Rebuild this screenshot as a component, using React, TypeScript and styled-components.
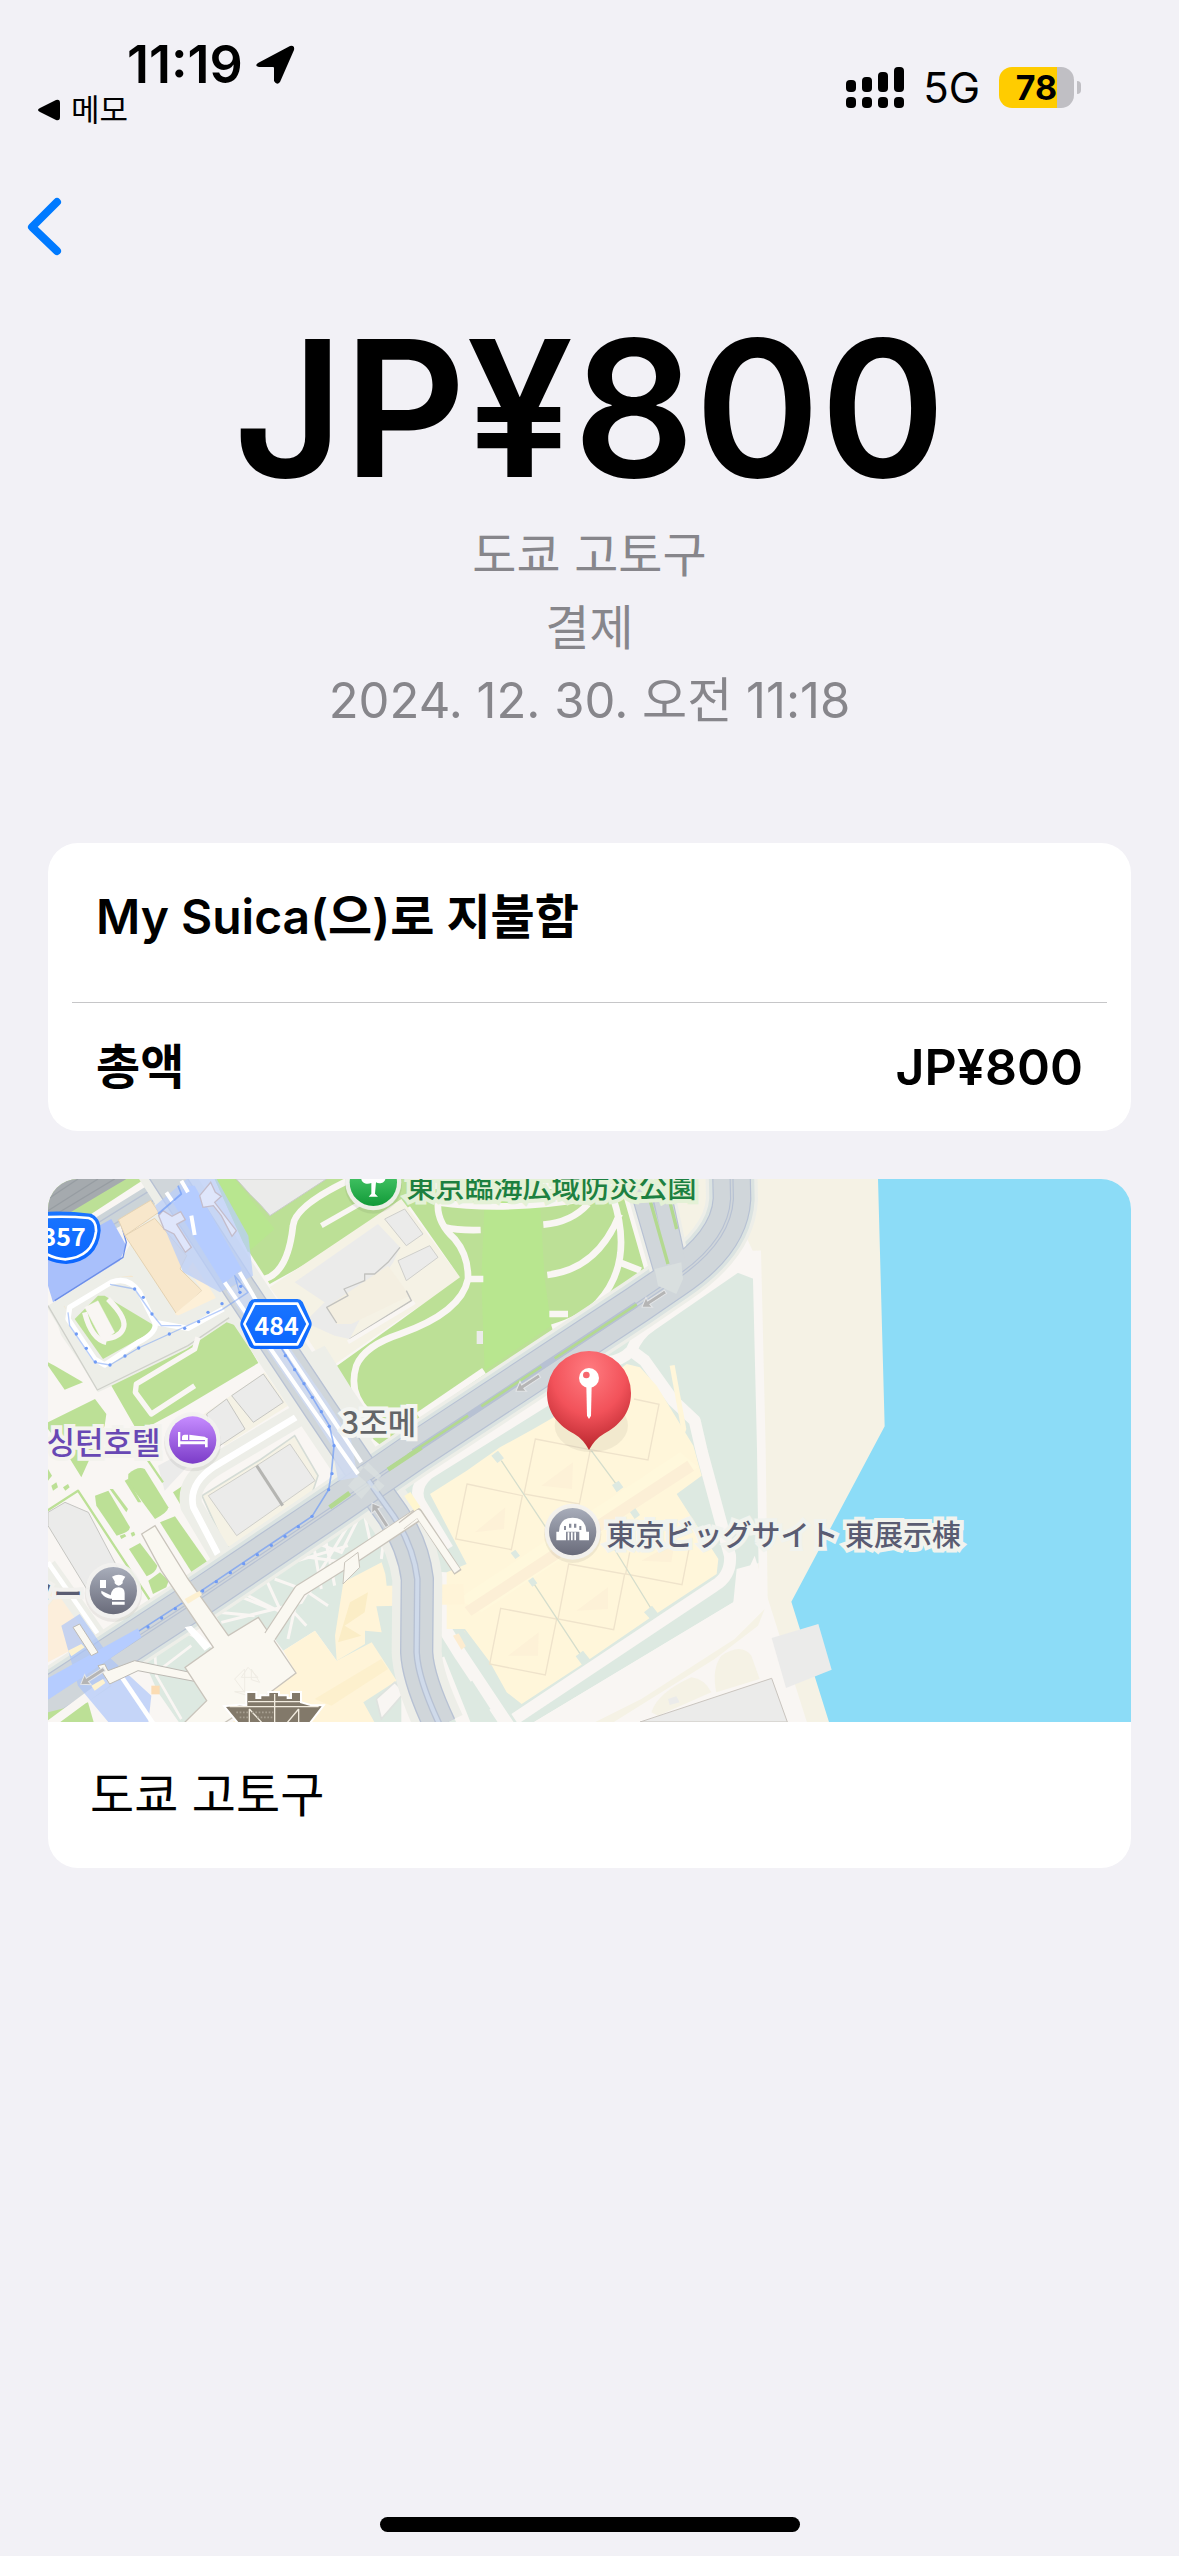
import React from "react";
import styled, { createGlobalStyle } from "styled-components";

const GlobalStyle = createGlobalStyle`
  *, *::before, *::after { box-sizing: border-box; }
  body {
    margin: 0;
    background: #f2f1f6;
    color: #000;
    font-family: Inter, "Noto Sans CJK KR", sans-serif;
  }
`;

const Page = styled.main`
  min-height: 100vh;
  display: flex;
  flex-direction: column;
`;

/* ---------- status bar ---------- */

const StatusBar = styled.header`
  display: flex;
  justify-content: space-between;
  align-items: flex-start;
  padding: 35px 98px 0 36px;
`;

const StatusLeft = styled.div`
  display: flex;
  flex-direction: column;
`;

const ClockRow = styled.div`
  display: flex;
  align-items: center;
  gap: 12px;
  padding-left: 91px;
`;

const Clock = styled.time`
  font-size: 52px;
  line-height: 60px;
  font-weight: 600;
`;

const ReturnLink = styled.a`
  display: flex;
  align-items: center;
  gap: 10px;
  font-size: 31px;
  line-height: 30px;
  font-weight: 400;
  color: #000;
  text-decoration: none;
`;

const StatusRight = styled.div`
  display: flex;
  align-items: center;
  gap: 19px;
  height: 41px;
  margin-top: 32px;
`;

const Network = styled.span`
  font-size: 42px;
  line-height: 41px;
  font-weight: 400;
`;

const Battery = styled.div`
  display: flex;
  align-items: center;
  gap: 3px;
`;

const BatteryBody = styled.div`
  width: 75px;
  height: 41px;
  border-radius: 13px;
  display: flex;
  align-items: center;
  justify-content: center;
  background: linear-gradient(to right, #ffcc00 78%, #c0bfc4 78%);
  font-size: 34px;
  line-height: 41px;
  font-weight: 700;
`;

const BatteryTip = styled.div`
  width: 4px;
  height: 13px;
  border-radius: 0 4px 4px 0;
  background: #c0bfc4;
`;

/* ---------- navigation and summary ---------- */

const NavBar = styled.nav`
  display: flex;
  padding: 68px 24px 0;
`;

const BackButton = styled.button`
  display: flex;
  padding: 0;
  border: 0;
  background: none;
  color: #007aff;
`;

const Summary = styled.section`
  display: flex;
  flex-direction: column;
  align-items: center;
  padding: 49px 24px 0;
`;

const Amount = styled.h1`
  margin: 0 0 10px;
  font-size: 190px;
  line-height: 200px;
  font-weight: 600;
`;

const SummaryLine = styled.p<{ $mixed?: boolean }>`
  margin: 0;
  font-size: ${(p) => (p.$mixed ? 49 : 48)}px;
  line-height: 73px;
  color: #87868b;
`;

/* ---------- cards ---------- */

const Cards = styled.div`
  display: flex;
  flex-direction: column;
  gap: 48px;
  padding: 106px 48px 48px;
`;

const Card = styled.section`
  border-radius: 30px;
  overflow: hidden;
  background: #fff;
`;

const CardRow = styled.div<{ $tall?: boolean }>`
  display: flex;
  justify-content: space-between;
  align-items: center;
  margin: 0 24px;
  padding: ${(p) => (p.$tall ? "44px 24px 55px" : "34px 24px 34px")};
  font-size: 48px;
  line-height: 60px;
  font-weight: 600;
  & + & {
    border-top: 1px solid #c6c6c8;
  }
`;

const Total = styled.span`
  font-size: 50px;
`;

const Caption = styled.p`
  margin: 0;
  padding: 43px 42px;
  font-size: 48px;
  line-height: 60px;
`;

const HomeIndicator = styled.div`
  width: 420px;
  max-width: 40%;
  height: 15px;
  margin: auto auto 24px;
  border-radius: 8px;
  background: #000;
`;

/* ---------- map ---------- */

const MapFrame = styled.div`
  position: relative;
  height: 543px;
  overflow: hidden;
`;

const MapDrawing = styled.svg`
  display: block;
  width: 100%;
  height: 100%;
`;

/* Labels are anchored to the centre of the map, like the drawing itself. */
const MapLabel = styled.span<{ $x: number; $y: number; $color: string; $halo: string }>`
  position: absolute;
  left: calc(50% + ${(p) => p.$x}px);
  top: ${(p) => p.$y}px;
  transform: translateY(-50%);
  white-space: nowrap;
  font-family: "Noto Sans CJK KR", sans-serif;
  font-size: 31px;
  line-height: 36px;
  font-weight: 500;
  color: ${(p) => p.$color};
  -webkit-text-stroke: 8px ${(p) => p.$halo};
  paint-order: stroke fill;
`;

const JapaneseLabel = styled(MapLabel)`
  font-family: "Noto Sans CJK JP", sans-serif;
  font-size: 29px;
`;

const RouteNumber = styled(MapLabel)`
  font-size: 25px;
  font-weight: 700;
  -webkit-text-stroke: 0;
`;

const C = {
  land: "#f9f6f3",
  cream: "#f5f2e5",
  green: "#bce096",
  bright: "#b8e68f",
  teal: "#dde9e1",
  road: "#d0d6da",
  edge: "#b7c1d3",
  curb: "#edeee8",
  grey: "#ebebea",
  hall: "#fff6da",
  plaza: "#faf8f1",
  blue: "#b5ccff",
  route: "#6f9bf5",
};

const Poly = ({ p, f, s, w = 3, o }: { p: string; f: string; s?: string; w?: number; o?: number }) => (
  <polygon points={p} fill={f} stroke={s} strokeWidth={s ? w : undefined} opacity={o} />
);

const Line = ({ d, s, w, o }: { d: string; s: string; w: number; o?: number }) => (
  <path d={d} fill="none" stroke={s} strokeWidth={w} opacity={o} strokeLinejoin="round" />
);

const MAIN = "M-60 1592L456 1255L846 992L1096 820L1766 378L1880 300Q2045 190 2052 60L2050 -30";
const AVENUE = "M330 -50L576 330L816 690L961 905L1036 1010Q1096 1100 1108 1200L1106 1420Q1110 1500 1176 1640";
const SOUTH = "M961 905L1036 1010Q1096 1100 1108 1200L1106 1420Q1110 1500 1176 1640";
const LOOP =
  "M2100 240L1810 440Q1770 465 1750 515Q1720 545 1680 548L1140 885Q1095 925 1116 970L1200 1110";
const HALL =
  "1356,805 1456,750 1560,690 1736,555 1776,565 1826,620 1936,800 1961,890 1886,945 2011,1140 2006,1185 1801,1320 1596,1460 1421,1575 1376,1540 1326,1450 1251,1350 1196,1350 1196,1180 1256,1155 1146,945 1256,875";

const routeDots = [
  [712, 530], [740, 572], [768, 614], [793, 655], [820, 698], [844, 742], [858, 800], [852, 884], [842, 932],
  [792, 1012], [751, 1043], [711, 1072], [670, 1099], [628, 1127], [587, 1154], [547, 1181], [505, 1208],
  [464, 1236], [382, 1289], [341, 1317], [300, 1344],
  [85, 465], [115, 508], [142, 549], [186, 558], [231, 531], [272, 507], [364, 465], [410, 448], [452, 428],
  [480, 400], [522, 374], [576, 340], [578, 322], [260, 330], [286, 355], [312, 405],
];

const Arrow = ({ x, y, a }: { x: number; y: number; a: number }) => (
  <path
    transform={`translate(${x} ${y}) rotate(${a})`}
    d="M0 0L26 -18L24 -6L84 -6L84 6L24 6L26 18Z"
    fill="#b5b5b5"
    stroke="#e4e6e8"
    strokeWidth={3}
  />
);

const Badge = ({ x, y, fill, children }: { x: number; y: number; fill: string; children: React.ReactNode }) => (
  <g transform={`translate(${x} ${y})`}>
    <circle r={86} cy={8} fill="#000" opacity={0.06} />
    <circle r={84} fill="#f3f2ef" opacity={0.9} />
    <circle r={71} fill={fill} />
    {children}
  </g>
);

/* Footpaths inside the turning circle. */
const CirclePaths = () => (
  <g fill="none" stroke={C.land}>
    <path d="M110 400Q130 480 175 490M180 360Q240 420 225 450Q215 475 170 480" strokeWidth={16} />
    <path d="M110 385L150 365L200 460L165 490Z" fill={C.land} />
  </g>
);

const CityMap = () => (
  <MapDrawing viewBox="0 0 3249 1629" preserveAspectRatio="xMidYMid slice" aria-hidden="true">
    <defs>
      <linearGradient id="gGreen" x1="0" y1="0" x2="0" y2="1">
        <stop offset="0" stopColor="#5fd97c" />
        <stop offset="1" stopColor="#119a38" />
      </linearGradient>
      <linearGradient id="gPurple" x1="0" y1="0" x2="0" y2="1">
        <stop offset="0" stopColor="#c68cff" />
        <stop offset="1" stopColor="#7b3cc8" />
      </linearGradient>
      <linearGradient id="gSlate" x1="0" y1="0" x2="0" y2="1">
        <stop offset="0" stopColor="#a8adba" />
        <stop offset="1" stopColor="#696b7a" />
      </linearGradient>
      <radialGradient id="gPin" cx="0.5" cy="0.2" r="0.8">
        <stop offset="0" stopColor="#ff7b80" />
        <stop offset="0.55" stopColor="#f2525a" />
        <stop offset="1" stopColor="#b8262d" />
      </radialGradient>
      <linearGradient id="gSign" x1="0" y1="0" x2="0" y2="1">
        <stop offset="0" stopColor="#1a75ff" />
        <stop offset="1" stopColor="#0b66ff" />
      </linearGradient>
    </defs>

    <rect width={3249} height={1629} fill={C.land} />
    <Poly p="2010,-10 2520,-10 2520,1640 2130,1640 2130,250" f={C.cream} />
    <Poly p="1800,-10 2020,-10 2010,120 1900,220 1860,130" f={C.cream} />

    {/* bay */}
    <Poly p="2490,0 2510,742 2230,1268 2343,1629 3249,1629 3249,0" f="#8cdcf7" />

    {/* rail yard and upper-left roads */}
    <Poly p="0,0 290,0 0,190" f={C.green} />
    <Poly p="0,0 235,0 150,50 0,140" f="#a5aaae" />
    <Line d="M0 60L90 0M0 95L150 0M0 120L200 0" s="#979da2" w={4} />
    <Poly p="0,205 330,0 420,0 420,40 200,150 0,280" f="#ccd4d8" />
    <Line d="M0 225L345 10M0 255L390 20" s={C.edge} w={4} />
    <Poly p="300,0 360,0 350,34 320,34" f="#bfcbd2" />

    {/* blocks on the left */}
    <Poly p="0,380 220,240 330,60 530,330 610,430 150,640 0,390" f={C.curb} />
    <Poly p="0,225 190,120 235,200 215,245 15,370 0,320" f="#a9c0fb" />
    <Line d="M215 120L235 190L225 235L20 365" s="#6c8ee8" w={4} />
    <Poly p="211,122 308,64 332,100 231,170" f="#f8e7cb" s="#e4d2b2" />
    <Poly p="231,170 320,118 416,230 396,270 462,335 386,405" f="#f8e7cb" s="#e4d2b2" />
    <Poly p="440,240 500,330 505,370 400,415 380,405 462,335 420,270" f="#fdf0d8" />
    <Line d="M50 385L175 300L250 295L330 400L345 440" s="#f5e6cc" w={10} />

    {/* parks */}
    <Poly p="500,0 1116,0 1116,65 665,315 585,190" f={C.green} />
    <Poly p="500,0 560,0 640,100 680,150 600,220" f={C.bright} />
    <Poly p="565,0 835,0 666,110 640,80 606,46" f={C.grey} s="#c9cbc8" />
    <Poly p="665,325 1060,60 1240,300 1056,420 840,570 780,480" f={C.cream} />
    <Poly p="740,310 990,135 1056,205 1036,250 1000,300 905,480 860,470 770,430 830,370" f={C.grey} />
    <Poly p="835,385 930,320 1020,260 1085,350 910,435 866,435" f="#f4efe1" />
    <Line d="M905 480L1090 365L1075 335M866 432L836 385L900 350L888 330L950 305L950 285L980 285L1020 250L1056 205" s="#c2c2bf" w={4} />
    <Poly p="1010,120 1070,90 1125,165 1075,200" f={C.grey} s="#cfcfcb" />
    <Poly p="1050,245 1145,200 1170,235 1075,305" f={C.grey} s="#cfcfcb" />
    <Poly p="840,580 1056,425 1236,295 1085,80 1120,30 1720,30 1790,275 1110,720 1000,800 950,760" f={C.green} />
    <Poly p="1310,60 1475,60 1490,300 1510,440 1310,575 1300,300" f={C.bright} />

    {/* park paths */}
    <g fill="none" stroke={C.land} strokeWidth={20}>
      <path d="M910 0Q740 80 735 140Q720 280 650 300" />
      <path d="M960 60L820 140" strokeWidth={16} />
      <path d="M1170 70Q1165 130 1220 180Q1262 230 1260 300Q1240 400 1056 465Q950 500 925 560Q900 640 960 700" />
      <path d="M1190 145Q1230 155 1298 153M1258 300L1306 300M1170 70Q1380 100 1640 55" />
      <path d="M1620 75Q1570 130 1486 137M1715 105Q1650 270 1498 288M1695 55Q1760 250 1650 370Q1600 420 1512 446M1504 405L1560 405M1715 250L1778 275" />
      <path d="M1308 575L1110 710" />
      <path d="M1100 370L900 490" strokeWidth={12} />
    </g>
    <Poly p="1286,456 1305,456 1305,495 1286,495" f={C.grey} />
    <Poly p="905,620 1000,760 960,790 790,520 830,500" f={C.curb} />

    {/* loop street */}
    <Line d="M60 400L190 325L260 330L330 430L400 450L560 380" s={C.curb} w={70} />
    <Line d="M60 400L75 450L160 570L330 480L420 440L570 370" s={C.curb} w={80} />
    <Poly p="150,350 170,350 320,440 310,460 165,540 80,420" f={C.green} />
    <CirclePaths />
    <Line d="M65 385L190 310Q240 290 275 340L320 430Q330 460 270 490L170 558L140 540L60 420Z" s="#fff" w={16} />
    <Line d="M320 430L420 448L580 360" s="#fff" w={16} />
    <Line d="M0 380L148 633L420 500L545 415L620 440" s="#cfd0ca" w={4} />

    {/* lower-left parks and blocks */}
    <Poly p="0,550 20,560 105,610 50,632 0,560" f={C.green} />
    <Poly p="190,620 416,510 536,430 566,440 631,552 400,690 270,760" f={C.green} />
    <Line d="M450 475L440 510L265 615L262 640L310 705L440 620M640 560L420 700" s={C.land} w={16} />
    <Poly p="0,730 141,660 175,705 170,740 100,895 60,830 0,750" f={C.green} />
    <Poly p="460,710 650,580 720,680 530,800" f={C.cream} />
    <Poly p="551,650 646,585 706,670 616,730" f={C.grey} s="#c6c6c2" />
    <Poly p="476,705 536,660 591,750 500,810" f={C.grey} s="#c6c6c2" />
    <Poly p="330,860 480,780 420,860 350,935" f={C.grey} />
    <Poly p="0,1000 51,970 121,1000 216,1180 116,1230 0,1040" f={C.grey} s="#c6c6c2" />
    <Poly p="0,1200 70,1240 170,1360 0,1450" f="#fceedb" />
    <Line d="M-10 1000L90 935L310 1270" s={C.green} w={7} />
    <Line d="M270 800L345 910" s={C.green} w={7} />
    <g fill={C.green}>
      <polygon points="0,870 12,890 0,905" />
      <polygon points="10,920 25,910 30,925 15,935" />
      <polygon points="45,925 60,915 65,925 52,935" />
      <path d="M141 950L181 935L246 1045Q245 1060 206 1070L145 980Z" />
      <path d="M241 885Q270 860 290 870L361 985Q360 1000 321 1020L240 910Z" />
      <path d="M336 1030L381 1012L478 1150L431 1180Z" />
      <path d="M243 1110L276 1092L328 1160Q325 1180 296 1192Z" />
      <path d="M301 1205L336 1180L362 1205L355 1225L315 1245Z" />
      <polygon points="185,930 195,930 240,990 235,1000" />
      <polygon points="230,905 240,900 280,970 270,970" />
      <polygon points="215,1070 230,1065 235,1072 220,1080" />
      <polygon points="248,1062 258,1058 262,1068 252,1073" />
      <polygon points="375,940 420,910 405,990" />
    </g>

    {/* side street */}
    <Poly p="462,950 640,840 740,770 810,890 790,950 560,1110 530,1100" f={C.cream} s="#d5dcd6" w={5} />
    <Poly p="481,950 626,860 726,795 801,905 566,1070" f={C.grey} s="#cfcfca" />
    <Line d="M626 860L704 980" s="#b5b5b2" w={9} />
    <Line d="M800 680L500 858Q415 910 430 980L540 1165" s={C.curb} w={66} />
    <Line d="M785 690L500 862Q420 915 436 985L530 1165" s="#fff" w={20} />
    <Line d="M0 1160L170 1400" s={C.curb} w={50} />
    <Line d="M0 1150L160 1380" s="#fff" w={14} />

    {/* ground around the exhibition halls */}
    <Poly p="2040,270 2118,300 2141,1150 2066,1170 2056,1270 1440,1640 1120,1640 1150,1100 1040,930 1200,850" f={C.teal} />
    <Poly p="490,1290 930,990 1010,1060 1060,1200 1060,1640 850,1640 866,1445 801,1355 706,1415 631,1315 541,1370" f={C.teal} />
    <Poly p="276,1420 400,1355 496,1410 411,1465 476,1565 400,1640 330,1540" f={C.teal} />
    <g fill="none" stroke={C.land} strokeWidth={9}>
      <path d="M940 1000L880 1120L800 1090M500 1310L700 1160L900 1100M520 1330L760 1270L900 1040M580 1240L700 1300L640 1170M680 1200L790 1240M795 1090L820 1230M830 1070L860 1220M750 1130L890 1150M740 1290L720 1380M710 1270L775 1340M780 1240L840 1280M950 1010L965 1080M510 1300L620 1310M570 1250L670 1290M1010 1060L1000 1140" />
      <path d="M320 1410L325 1490L400 1620M325 1480L430 1400" strokeWidth={8} />
    </g>

    {/* quay streets */}
    <Poly p="1440,1640 2056,1270 2120,1130 2160,1260 2280,1640" f={C.land} />
    <Poly p="1620,1640 1780,1560 2060,1380 2150,1290 2130,1340 2000,1440 1680,1640" f={C.cream} />
    <path d="M1810 1600Q1830 1540 1930 1495Q1970 1500 1990 1540L1830 1610Z" fill={C.cream} />
    <path d="M2005 1540Q1990 1470 2020 1430Q2080 1390 2110 1430L2135 1500Z" fill={C.cream} />
    <Poly p="1776,1629 2171,1498 2218,1629" f={C.grey} s="#c9c4be" />
    <Poly p="2171,1377 2311,1335 2351,1472 2214,1527" f={C.grey} />
    <Poly p="1860,1560 1885,1552 1895,1570 1865,1578" f={C.grey} />
    <Line d="M2126 215L2140 810L2146 1260" s={C.land} w={26} />
    <Line d={LOOP} s={C.land} w={34} />
    <Line d="M1750 515L1790 545L1876 665L1940 725L1962 820L2046 1130Q2050 1190 2000 1220L1400 1620" s={C.land} w={36} />
    <Line d="M1200 1180L1190 1350L1240 1430L1380 1640M1170 1440L1250 1640" s={C.land} w={40} />
    <Line d="M1265 1510L1320 1595" s={C.teal} w={18} />

    {/* east hall */}
    <Poly p={HALL} f={C.hall} />
    <Poly p="1865,560 1880,558 1915,750 1905,780" f={C.hall} />
    <Poly p="1896,820 1950,865 1300,1300 1230,1260" f="#fff8dc" />
    <Poly p="1918,845 1938,875 1270,1310 1250,1285" f="#fcefd6" />
    <Poly p="1215,1370 1250,1355 1262,1395 1240,1412" f="#fdecd0" />
    <g fill="none" stroke="#efe3cb" strokeWidth={4}>
      <path d="M1462 780L1627 812L1594 975L1428 945ZM1758 660L1833 676L1800 843L1627 812M1257 915L1423 950L1390 1112L1223 1080Z" />
      <path d="M1562 1155L1730 1185L1697 1352L1530 1320ZM1745 1120L1733 1185L1902 1217L1925 1100M1358 1288L1526 1320L1492 1488L1325 1455Z" />
    </g>
    <g fill="none" stroke="#d5ddcc" strokeWidth={4}>
      <path d="M1360 845L1500 1055M1630 815L1708 920M1690 1095L1810 1290M1455 1210L1600 1430" />
    </g>
    <g fill={C.teal}>
      <path d="M1330 830L1350 815L1368 838L1348 852ZM1692 918L1712 905L1726 925L1706 940ZM1388 1122L1402 1112L1416 1130L1402 1140ZM1440 1205L1455 1195L1468 1213L1453 1223ZM1788 1300L1812 1280L1832 1306L1810 1324ZM1583 1432L1605 1415L1628 1444L1604 1460ZM1746 1000L1762 988L1776 1008L1760 1020ZM1230 1360L1245 1350L1272 1395L1258 1410Z" />
    </g>
    <g fill="#fdf1d7">
      <path d="M1480 920L1575 850L1572 930ZM1280 1060L1372 985L1368 1050ZM1585 1295L1680 1225L1680 1290ZM1380 1430L1472 1360L1470 1430ZM1780 1145L1880 1090L1870 1150Z" />
    </g>

    {/* west hall */}
    <Poly p="706,1415 801,1355 866,1445 971,1390 1046,1505 946,1570 985,1640 540,1640 640,1560 744,1482" f="#fff4d8" />
    <Poly p="886,1210 1001,1150 1012,1185 1016,1220 1246,1215 1250,1276 985,1282 1001,1360 951,1355 951,1395 866,1445 861,1370" f="#fff4d8" />
    <Poly p="800,1560 1000,1440 1020,1470 850,1580" f="#fdf0cd" />
    <Poly p="906,1270 960,1240 950,1300 890,1340 940,1370 870,1390" f="#fbedc6" />
    <path d="M985 1560L1040 1510L1070 1540L1000 1620Z" fill={C.land} stroke="#dfe3df" strokeWidth={5} />

    {/* roads */}
    <Line d={AVENUE} s={C.curb} w={150} />
    <Line d={MAIN} s={C.curb} w={156} />
    <Line d={MAIN} s="#dbe3e1" w={136} />
    <Line d="M1770 20L1845 280M1838 20L1888 260" s={C.curb} w={76} />
    <Line d={AVENUE} s={C.edge} w={100} />
    <Line d={AVENUE} s={C.road} w={92} />
    <Line d={MAIN} s={C.edge} w={116} />
    <Line d="M1772 20L1850 290M1836 20L1890 270" s={C.edge} w={60} />
    <Line d={MAIN} s={C.road} w={109} />
    <Line d="M1772 20L1850 290M1836 20L1890 270" s={C.road} w={53} />
    <Line d={MAIN} s={C.edge} w={12} />
    <Line d={MAIN} s={C.road} w={5} />
    <Line d="M1096 818L1766 376" s={C.edge} w={18} />
    <Line d="M1080 828L1260 710M1300 682L1480 563M1520 538L1766 376" s="#b3d990" w={8} />
    <Line d="M1020 872L1120 806M845 985L905 942" s="#b3d990" w={14} />
    <Line d="M1805 60L1860 255M1866 70L1886 150" s="#b3d990" w={10} />
    <Line d={SOUTH} s={C.edge} w={20} />
    <Line d={SOUTH} s="#cfdaea" w={12} />
    <path d="M960 850l40 40l-60 70l-40 -40zM920 880l70 60l20 -20l-70 -60z" fill="#d9e0e0" opacity={0.8} />
    <Poly p="1820,270 1900,250 1905,300 1885,345 1830,320" f="#d9dfdf" />

    {/* transit avenue */}
    <Line d="M560 320L816 690L880 790L900 900" s="#cfdaf0" w={60} o={0.9} />
    <Poly p="321,80 416,0 506,0 601,170 615,290 516,340 406,280" f="#b9cdf8" o={0.75} />
    <Poly p="371,65 416,20 440,20 581,270 526,315" f={C.blue} />
    <g fill="#dfe6fb" stroke="#c4bdcb" strokeWidth={4}>
      <path d="M332 110L345 95L372 112L398 98L412 122L386 136L430 205L412 220L378 165L348 150Z" />
      <path d="M455 50L488 10L502 40L520 52L500 70L565 155L552 172L520 110L496 80L465 85Z" />
    </g>
    <Line d="M355 40L375 70M400 5L420 40M430 110L440 168M530 310L800 700L930 885M575 280L680 460L940 850" s="#fff" w={12} />
    <Line d="M330 105L400 45L390 20M676 470L790 650L844 740L858 800L850 884L842 932L792 1012L456 1238L270 1358" s={C.route} w={5} o={0.7} />
    <Line d="M60 400L65 440L140 550L186 558L272 507L364 465L522 392L600 340L560 290L576 345M186 316L260 330L312 405L340 440L400 440" s={C.route} w={4} o={0.5} />
    {routeDots.map(([x, y]) => (
      <circle key={`${x}-${y}`} cx={x} cy={y} r={5} fill={C.route} />
    ))}

    {/* lower-left station */}
    <Poly p="0,1600 120,1570 140,1640 0,1640" f={C.green} />
    <Line d="M0 1640L190 1500L240 1560" s={C.land} w={26} />
    <Poly p="40,1340 95,1305 190,1440 310,1550 300,1640 190,1640 90,1520" f="#a9c3fb" o={0.65} />
    <Line d="M215 1485L320 1640" s="#fff" w={14} />
    <Poly p="0,1497 270,1348 280,1375 110,1490 0,1562" f={C.blue} />
    <Poly p="60,1415 100,1395 110,1405 70,1432" f="#fdf2d0" />
    <Poly p="130,1520 165,1500 172,1512 140,1535" f="#fdf2d0" />
    <Poly p="310,1520 335,1520 335,1546 310,1546" f="#fbdcb4" />
    <Poly p="75,1345 95,1335 150,1420 130,1430" f={C.plaza} s="#bdbab4" />
    <Poly p="150,1460 170,1455 180,1475 260,1445 450,1485 455,1510 270,1475 185,1515" f={C.plaza} s="#bdbab4" />

    {/* plaza and pedestrian decks */}
    <Poly p="281,1065 321,1040 420,1200 541,1370 631,1315 744,1482 640,1560 516,1640 400,1640 476,1565 411,1465 496,1405 340,1175" f={C.plaza} s="#c9c4bb" w={4} />
    <Poly p="410,1260 455,1235 462,1248 420,1274" f="#fdf0d0" />
    <Poly p="410,1345 430,1340 490,1400 470,1415" f="#fff" />
    <Line d="M666 1372L756 1235L900 1145L1116 1003" s="#c9c4bb" w={40} />
    <Line d="M662 1378L756 1235L900 1145L1126 995" s={C.plaza} w={33} />
    <Poly p="890,1150 930,1120 935,1165 885,1215" f={C.plaza} s="#c9c4bb" />
    <Line d="M1060 1040L1110 1000L1230 1180" s="#c9c4bb" w={26} />
    <Line d="M1056 1044L1110 1003L1228 1176" s={C.plaza} w={20} />
    <Line d="M1078 945L1108 990" s="#fff6cf" w={22} />
    <path d="M560 1500l30 -30v70zM600 1465l30 30h-50zM600 1550l-40 -12h40zM610 1470l25 40l-25 -8z" fill="none" stroke="#efece4" strokeWidth={3} />

    <Arrow x={1782} y={384} a={-33} />
    <Arrow x={1404} y={636} a={-33} />
    <Arrow x={972} y={972} a={57} />
    <Arrow x={98} y={1516} a={-33} />

    {/* observation tower */}
    <path
      d="M534 1584L575 1580L598 1582V1542H622V1560H640V1552H664V1542H690V1552H716V1560H732V1542H756V1572L790 1582H821L776 1640H580Z"
      fill="#82796a"
      stroke="#fff"
      strokeWidth={12}
      paintOrder="stroke"
    />
    <path d="M545 1583H812M680 1545V1629M604 1590L650 1640M604 1590V1640M752 1590L710 1640M752 1590V1640M600 1568H756" stroke="#f2ecdf" strokeWidth={4} fill="none" />
    <path d="M565 1600H600M575 1615H602M612 1600H676M628 1615H676" stroke="#a69e90" strokeWidth={5} strokeDasharray="5 5" />

    {/* route signs */}
    <g transform="translate(684 435)">
      <path
        d="M-64 -75H64Q74 -75 80 -66L104 -12Q110 0 104 12L80 66Q74 75 64 75H-64Q-74 75 -80 66L-104 12Q-110 0 -104 -12L-80 -66Q-74 -75 -64 -75Z"
        fill="url(#gSign)"
      />
      <path d="M-64 -61H64L95 0L64 61H-64L-95 0Z" fill="none" stroke="#fff" strokeWidth={8} strokeLinejoin="round" />
    </g>
    <path d="M-40 100Q50 94 130 104Q158 116 158 155Q150 245 55 255Q-20 250 -50 200Z" fill="url(#gSign)" />
    <path d="M-40 116Q50 110 122 117Q146 124 144 158Q134 234 52 241Q-10 236 -44 190Z" fill="none" stroke="#fff" strokeWidth={8} />

    {/* points of interest */}
    <Badge x={976} y={10} fill="url(#gGreen)">
      <path d="M-36 -14C-40 -40 -12 -44 0 -34C14 -46 42 -38 36 -14C38 2 18 6 8 0L5 34L14 43H-14L-6 34V2C-20 8 -38 2 -36 -14Z" fill="#fff" />
    </Badge>
    <Badge x={434} y={783} fill="url(#gPurple)">
      <path d="M-44 -24H-37V4H37V-6H45V22H37V13H-37V20H-44ZM-32 -8Q-32 -16 -24 -16H-14V0H-32ZM-10 -16L36 -10Q44 -8 44 0H-10Z" fill="#fff" />
    </Badge>
    <Badge x={1574} y={1058} fill="url(#gSlate)">
      <path d="M-49 0H-41Q-40 -42 0 -42Q40 -42 41 0H49V26H20V0H-20V26H-49ZM-15 2H-10V26H-15ZM-5 2H0V26H-5ZM5 2H10V26H5Z" fill="#fff" />
      <path d="M-26 -17h6v12h-6zM-11 -24h7v12h-7zM4 -24h7v12h-7zM20 -17h6v12h-6z" fill="#878b99" />
    </Badge>
    <Badge x={196} y={1235} fill="url(#gSlate)">
      <path d="M-4 -42Q16 -54 36 -42L28 -28V-22Q16 -8 4 -22V-28ZM-40 -32H-22V-8H-40ZM-36 0L-8 14Q-4 -10 16 -10Q34 -10 34 8V28H-4V24Q-22 26 -36 8ZM-4 33H34V42H-4Z" fill="#fff" />
    </Badge>

    {/* transaction pin */}
    <ellipse cx={1630} cy={740} rx={110} ry={80} fill="#000" opacity={0.05} />
    <path
      d="M1623 516A126 126 0 0 1 1749 642C1749 705 1710 742 1668 764Q1640 780 1623 813Q1606 780 1578 764C1536 742 1497 705 1497 642A126 126 0 0 1 1623 516Z"
      fill="url(#gPin)"
    />
    <path d="M1615 620H1631L1629 710L1623 720L1617 710Z" fill="#fff" />
    <circle cx={1623} cy={597} r={30} fill="#fff" />
    <circle cx={1615} cy={588} r={10} fill="#f7666d" />
  </MapDrawing>
);

const signalBars = [12, 15, 20, 25];

export default function App() {
  return (
    <>
      <GlobalStyle />
      <Page>
        <StatusBar>
          <StatusLeft>
            <ClockRow>
              <Clock>11:19</Clock>
              <svg width="40" height="40" viewBox="0 0 40 40" aria-hidden="true">
                <path d="M3 18L35 1Q40 0 39 5L25 37Q22 41 19 36V23Q19 22 18 22H4Q-1 21 3 18Z" />
              </svg>
            </ClockRow>
            <ReturnLink href="#memo">
              <svg width="25" height="22" viewBox="0 0 25 22" aria-hidden="true">
                <path d="M4 9L20 1Q24 0 24 4V18Q24 22 20 21L4 13Q0 11 4 9Z" />
              </svg>
              메모
            </ReturnLink>
          </StatusLeft>
          <StatusRight>
            <svg width="58" height="41" viewBox="0 0 58 41" aria-hidden="true">
              {signalBars.map((h, i) => (
                <React.Fragment key={h}>
                  <rect x={i * 16} y={25 - h} width={10} height={h} rx={4} />
                  <rect x={i * 16} y={30} width={10} height={11} rx={4} />
                </React.Fragment>
              ))}
            </svg>
            <Network>5G</Network>
            <Battery>
              <BatteryBody>78</BatteryBody>
              <BatteryTip />
            </Battery>
          </StatusRight>
        </StatusBar>

        <NavBar>
          <BackButton type="button" aria-label="뒤로">
            <svg width="40" height="66" viewBox="0 0 40 66" fill="none" stroke="currentColor" strokeWidth="8" strokeLinecap="round" strokeLinejoin="round" aria-hidden="true">
              <path d="M33 9L8 34L33 58" />
            </svg>
          </BackButton>
        </NavBar>

        <Summary>
          <Amount>JP¥800</Amount>
          <SummaryLine>도쿄 고토구</SummaryLine>
          <SummaryLine>결제</SummaryLine>
          <SummaryLine $mixed>2024. 12. 30. 오전 11:18</SummaryLine>
        </Summary>

        <Cards>
          <Card>
            <CardRow $tall>
              <span>My Suica(으)로 지불함</span>
            </CardRow>
            <CardRow>
              <span>총액</span>
              <Total>JP¥800</Total>
            </CardRow>
          </Card>

          <Card>
            <MapFrame>
              <CityMap />
              <JapaneseLabel $x={-183} $y={6} $color="#1d8040" $halo="#e4f1d6">東京臨海広域防災公園</JapaneseLabel>
              <MapLabel $x={-543} $y={262} $color="#6848b4" $halo="#f4f3ee">싱턴호텔</MapLabel>
              <MapLabel $x={-248} $y={242} $color="#636568" $halo="#f4f5f2">3조메</MapLabel>
              <JapaneseLabel $x={-594} $y={413} $color="#5a5c72" $halo="#f2f1ee">ンター</JapaneseLabel>
              <JapaneseLabel $x={17} $y={354} $color="#5a5c72" $halo="#f1f3ee">東京ビッグサイト 東展示棟</JapaneseLabel>
              <RouteNumber $x={-335} $y={145} $color="#fff" $halo="transparent">484</RouteNumber>
              <RouteNumber $x={-548} $y={56} $color="#fff" $halo="transparent">357</RouteNumber>
            </MapFrame>
            <Caption>도쿄 고토구</Caption>
          </Card>
        </Cards>

        <HomeIndicator />
      </Page>
    </>
  );
}
